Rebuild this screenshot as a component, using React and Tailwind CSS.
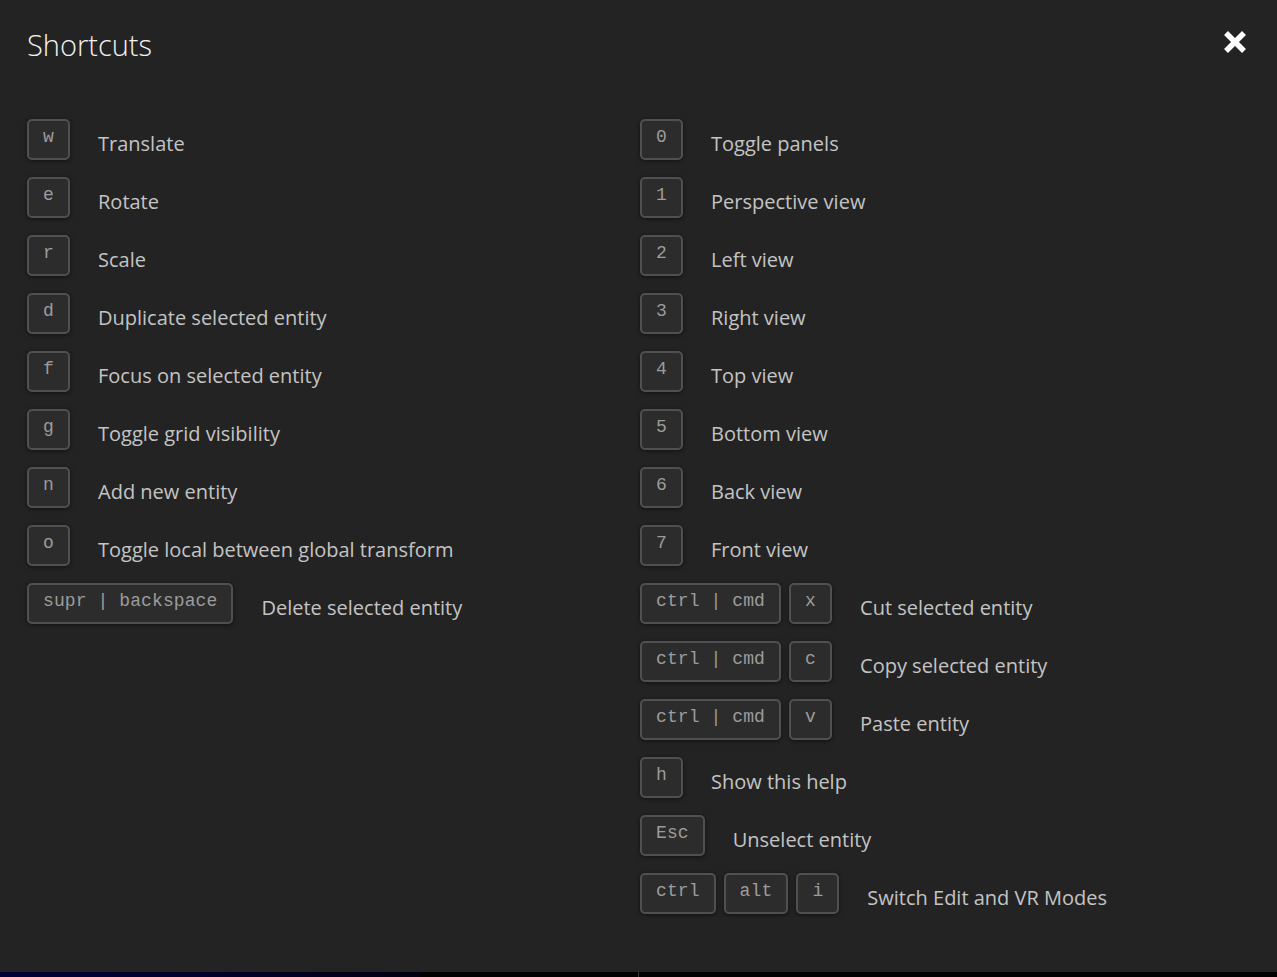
import React from 'react';

const left = [
  { keys: [['w']], label: 'Translate' },
  { keys: [['e']], label: 'Rotate' },
  { keys: [['r']], label: 'Scale' },
  { keys: [['d']], label: 'Duplicate selected entity' },
  { keys: [['f']], label: 'Focus on selected entity' },
  { keys: [['g']], label: 'Toggle grid visibility' },
  { keys: [['n']], label: 'Add new entity' },
  { keys: [['o']], label: 'Toggle local between global transform' },
  { keys: [['supr | backspace']], label: 'Delete selected entity' },
];

const right = [
  { keys: [['0']], label: 'Toggle panels' },
  { keys: [['1']], label: 'Perspective view' },
  { keys: [['2']], label: 'Left view' },
  { keys: [['3']], label: 'Right view' },
  { keys: [['4']], label: 'Top view' },
  { keys: [['5']], label: 'Bottom view' },
  { keys: [['6']], label: 'Back view' },
  { keys: [['7']], label: 'Front view' },
  { keys: [['ctrl | cmd'], ['x']], label: 'Cut selected entity' },
  { keys: [['ctrl | cmd'], ['c']], label: 'Copy selected entity' },
  { keys: [['ctrl | cmd'], ['v']], label: 'Paste entity' },
  { keys: [['h']], label: 'Show this help' },
  { keys: [['Esc']], label: 'Unselect entity' },
  { keys: [['ctrl'], ['alt'], ['i']], label: 'Switch Edit and VR Modes' },
];

function Key({ text }) {
  return (
    <span className="h-[41px] min-w-[43px] px-[14px] flex items-center justify-center rounded-[5px] border-2 border-[#505050] bg-[#2c2c2c] shadow-[0_1px_4px_rgba(0,0,0,0.5)] text-[#9c9c9c] text-[18px] tracking-[0.1px] pb-[4px] whitespace-pre" style={{ fontFamily: '"Liberation Mono", monospace' }}>
      {text}
    </span>
  );
}

function Row({ item }) {
  return (
    <div className="flex items-center h-[41px]">
      <div className="flex gap-2">
        {item.keys.map((k, i) => <Key key={i} text={k[0]} />)}
      </div>
      <span className="ml-[28px] pt-[9px] text-[20px] text-[#c4c4c4]">{item.label}</span>
    </div>
  );
}

export default function App() {
  return (
    <div className="w-[1277px] h-[977px] flex flex-col bg-[#232323] overflow-hidden" style={{ fontFamily: '"Open Sans", "Noto Sans", sans-serif' }}>
      <div className="flex-1 px-[27px]">
        <div className="flex items-start justify-between pt-[24px]">
          <h1 className="text-[29px] font-light text-[#f2f2f2] leading-[42px]">Shortcuts</h1>
          <svg width="26" height="26" viewBox="0 0 26 26" className="mt-[5px] mr-[2px]">
            <path d="M4 4 L22 22 M22 4 L4 22" stroke="#fff" strokeWidth="5.5" />
          </svg>
        </div>
        <div className="grid grid-cols-[613px_1fr] mt-[53px]">
          <div className="flex flex-col gap-[17px]">
            {left.map((it, i) => <Row key={i} item={it} />)}
          </div>
          <div className="flex flex-col gap-[17px]">
            {right.map((it, i) => <Row key={i} item={it} />)}
          </div>
        </div>
      </div>
      <div className="h-[5px] flex">
        <div className="w-[420px] bg-gradient-to-r from-[#000036] via-[#00002a] to-[#000012]" />
        <div className="w-[218px] bg-black" />
        <div className="w-px bg-[#3a3a3a]" />
        <div className="flex-1 bg-black" />
      </div>
    </div>
  );
}
